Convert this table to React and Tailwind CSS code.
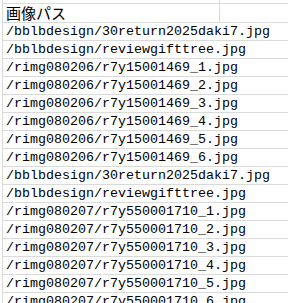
import React from 'react';

const rows = [
  '/bblbdesign/30return2025daki7.jpg',
  '/bblbdesign/reviewgifttree.jpg',
  '/rimg080206/r7y15001469_1.jpg',
  '/rimg080206/r7y15001469_2.jpg',
  '/rimg080206/r7y15001469_3.jpg',
  '/rimg080206/r7y15001469_4.jpg',
  '/rimg080206/r7y15001469_5.jpg',
  '/rimg080206/r7y15001469_6.jpg',
  '/bblbdesign/30return2025daki7.jpg',
  '/bblbdesign/reviewgifttree.jpg',
  '/rimg080207/r7y550001710_1.jpg',
  '/rimg080207/r7y550001710_2.jpg',
  '/rimg080207/r7y550001710_3.jpg',
  '/rimg080207/r7y550001710_4.jpg',
  '/rimg080207/r7y550001710_5.jpg',
  '/rimg080207/r7y550001710_6.jpg',
];

const App = () => {
  return (
    <div className="w-[288px] h-[303px] overflow-hidden bg-white pl-[2px]">
      {/* row above the header, cut off */}
      <div className="h-[4px] border-b border-[#dadada] flex">
        <div className="w-[218px] border-l border-r border-[#dadada]" />
      </div>
      <div className="h-[19px] border-b border-[#dadada] flex">
        <div
          className="w-[218px] border-l border-r border-[#dadada] pl-[3px] text-[15px] leading-[18px] text-black"
          style={{ fontFamily: '"Noto Sans CJK JP", sans-serif' }}
        >
          画像パス
        </div>
      </div>
      {rows.map((path, i) => (
        <div
          key={i}
          className="h-[18px] border-b border-l border-[#dadada] pl-[3px] text-[13.33px] leading-[17px] text-black whitespace-nowrap"
          style={{ fontFamily: '"Liberation Mono", monospace' }}
        >
          {path}
        </div>
      ))}
    </div>
  );
};

export default App;
